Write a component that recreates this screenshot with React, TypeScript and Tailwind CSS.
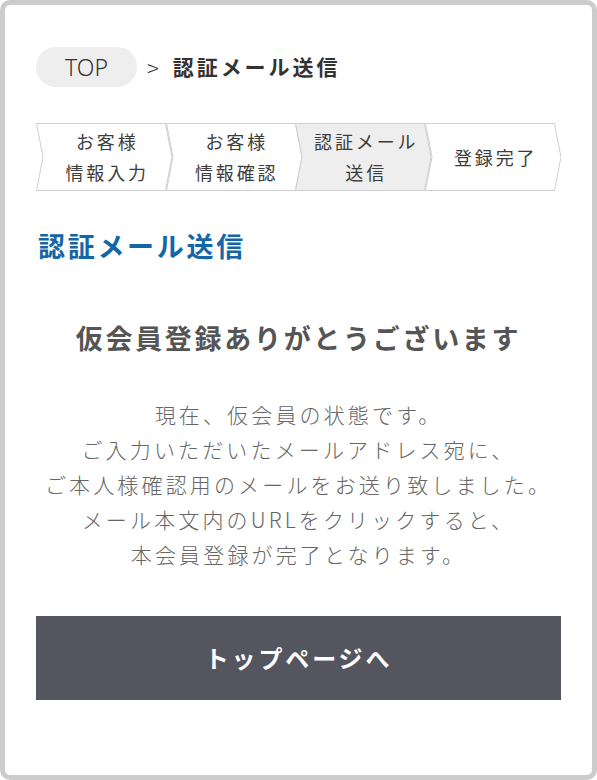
import React from 'react';

const steps = [
    { lines: ['お客様', '情報入力'], active: false },
    { lines: ['お客様', '情報確認'], active: false },
    { lines: ['認証メール', '送信'], active: true },
    { lines: ['登録完了'], active: false },
];

function Step({ lines, active, first }: { lines: string[]; active: boolean; first: boolean }) {
    return (
        <div className={`relative flex-1 h-[68px] flex items-center justify-center ${first ? '' : '-ml-[7px]'}`}>
            <svg className="absolute inset-0 w-full h-full" viewBox="0 0 136 68" preserveAspectRatio="none">
                <polygon
                    points="0.5,0.5 129,0.5 135.5,34 129,67.5 0.5,67.5 7,34"
                    fill={active ? '#eeeeee' : '#ffffff'}
                    stroke="#cfcfcf"
                    strokeWidth="1"
                    vectorEffect="non-scaling-stroke"
                />
            </svg>
            <div className="relative pl-[6px] text-center text-[18px] leading-[31px] tracking-[0.16em] text-[#3c3c3c]">
                {lines.map((l) => (
                    <div key={l}>{l}</div>
                ))}
            </div>
        </div>
    );
}

export default function App() {
    return (
        <div className="w-[597px] h-[780px] bg-white font-['Noto_Sans_CJK_JP','Noto_Sans',sans-serif]">
            <div className="h-full border-[5px] border-[#cccccc] rounded-[10px] px-[31px] pt-[42px]">

                {/* Breadcrumb */}
                <div className="flex items-center">
                    <div className="w-[101px] h-[40px] rounded-full bg-[#eeeeee] flex items-center justify-center text-[23px] font-light text-[#333] font-['Noto_Sans','Liberation_Sans',sans-serif]">
                        TOP
                    </div>
                    <span className="ml-[10px] text-[22px] font-light text-[#333]">&gt;</span>
                    <span className="ml-[14px] text-[21px] font-bold tracking-[0.14em] text-[#333]">認証メール送信</span>
                </div>

                {/* Steps */}
                <div className="flex mt-[36px]">
                    {steps.map((s, i) => (
                        <Step key={i} lines={s.lines} active={s.active} first={i === 0} />
                    ))}
                </div>

                {/* Heading */}
                <h2 className="mt-[37px] ml-[2px] text-[27px] leading-[36px] font-bold tracking-[0.1em] text-[#1466a6]">
                    認証メール送信
                </h2>

                <h1 className="mt-[54px] text-center text-[27px] leading-[40px] font-bold tracking-[0.1em] text-[#555555]">
                    仮会員登録ありがとうございます
                </h1>

                <div className="mt-[39px] text-center text-[21px] leading-[35px] font-light tracking-[0.15em] text-[#666666]">
                    <p>現在、仮会員の状態です。</p>
                    <p>ご入力いただいたメールアドレス宛に、</p>
                    <p>ご本人様確認用のメールをお送り致しました。</p>
                    <p>メール本文内のURLをクリックすると、</p>
                    <p>本会員登録が完了となります。</p>
                </div>

                <button className="mt-[44px] w-full h-[84px] bg-[#55555f] text-white text-[24px] font-bold tracking-[0.12em] flex items-center justify-center">
                    トップページへ
                </button>
            </div>
        </div>
    );
}
